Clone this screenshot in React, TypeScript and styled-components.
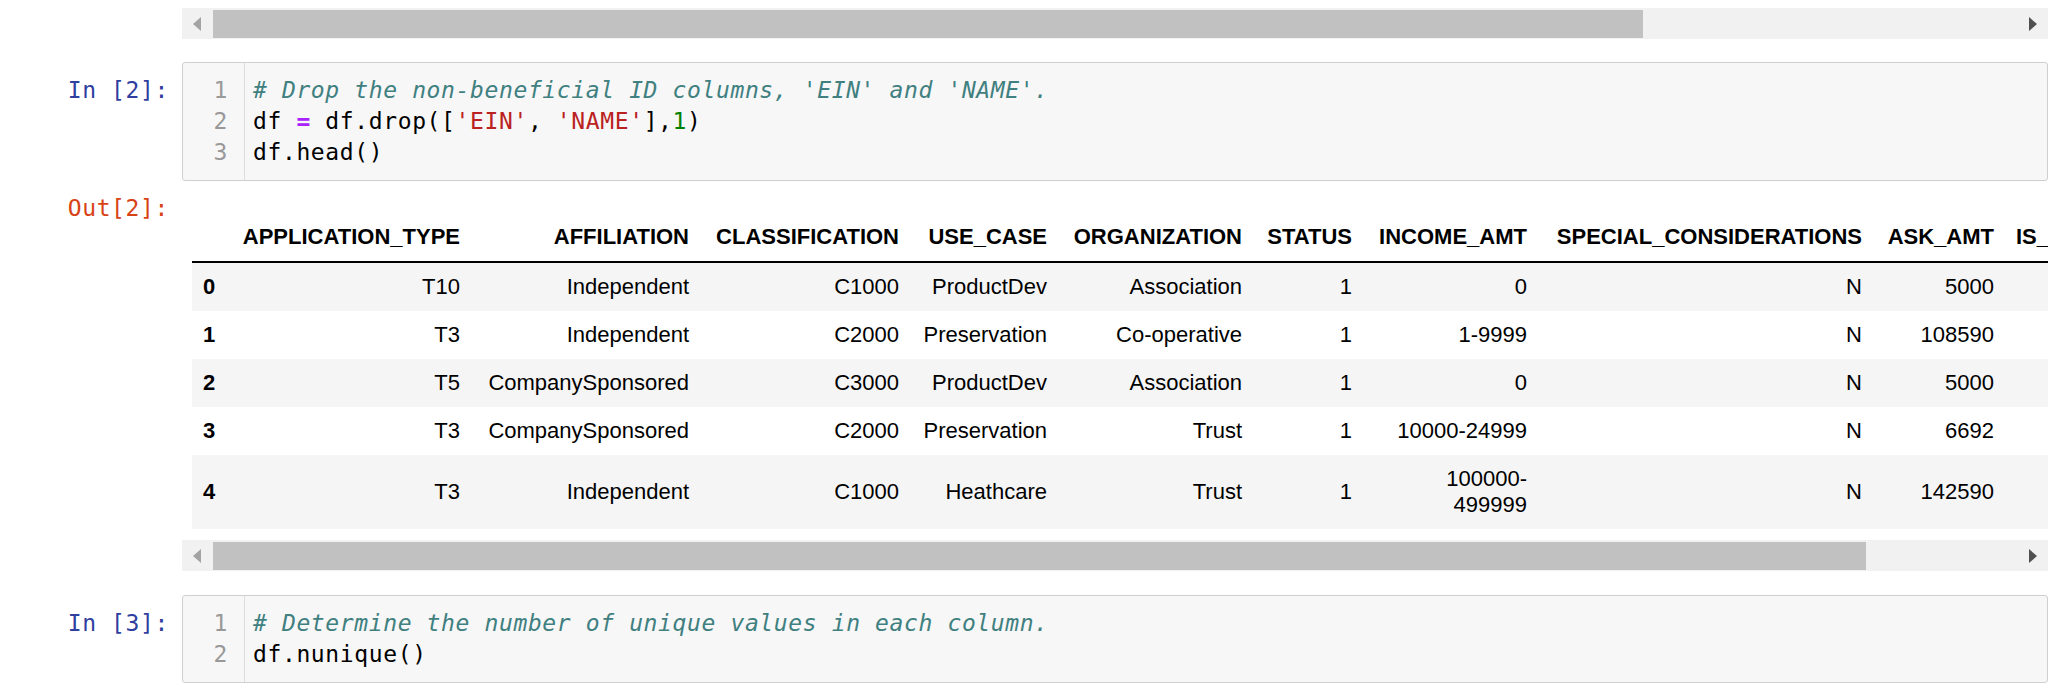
import React from 'react'
import styled, { createGlobalStyle } from 'styled-components'

const MONO = `'DejaVu Sans Mono', 'Liberation Mono', monospace`
const SANS = `'Liberation Sans', Arial, sans-serif`

const GlobalStyle = createGlobalStyle`
  html, body {
    margin: 0;
    padding: 0;
    background: #fff;
  }
`

type Tok = { t: string; k?: 'comment' | 'op' | 'str' | 'num' }

const cell1: Tok[][] = [
  [{ t: "# Drop the non-beneficial ID columns, 'EIN' and 'NAME'.", k: 'comment' }],
  [
    { t: 'df ' },
    { t: '=', k: 'op' },
    { t: ' df.drop([' },
    { t: "'EIN'", k: 'str' },
    { t: ', ' },
    { t: "'NAME'", k: 'str' },
    { t: '],' },
    { t: '1', k: 'num' },
    { t: ')' },
  ],
  [{ t: 'df.head()' }],
]

const cell2: Tok[][] = [
  [{ t: '# Determine the number of unique values in each column.', k: 'comment' }],
  [{ t: 'df.nunique()' }],
]

const columns = [
  { name: '', w: 37 },
  { name: 'APPLICATION_TYPE', w: 242 },
  { name: 'AFFILIATION', w: 229 },
  { name: 'CLASSIFICATION', w: 210 },
  { name: 'USE_CASE', w: 148 },
  { name: 'ORGANIZATION', w: 195 },
  { name: 'STATUS', w: 110 },
  { name: 'INCOME_AMT', w: 175 },
  { name: 'SPECIAL_CONSIDERATIONS', w: 335 },
  { name: 'ASK_AMT', w: 132 },
  { name: 'IS_SUCCESSFUL', w: 200 },
]

const rows = [
  ['0', 'T10', 'Independent', 'C1000', 'ProductDev', 'Association', '1', '0', 'N', '5000', '1'],
  ['1', 'T3', 'Independent', 'C2000', 'Preservation', 'Co-operative', '1', '1-9999', 'N', '108590', '1'],
  ['2', 'T5', 'CompanySponsored', 'C3000', 'ProductDev', 'Association', '1', '0', 'N', '5000', '1'],
  ['3', 'T3', 'CompanySponsored', 'C2000', 'Preservation', 'Trust', '1', '10000-24999', 'N', '6692', '1'],
  ['4', 'T3', 'Independent', 'C1000', 'Heathcare', 'Trust', '1', '100000-\n499999', 'N', '142590', '1'],
]

const tableWidth = columns.reduce((s, c) => s + c.w, 0)

function CodeCell({ n, lines }: { n: number; lines: Tok[][] }) {
  return (
    <Row $top={n === 2 ? 23 : 24}>
      <Prompt $kind="in">In [{n}]:</Prompt>
      <Editor>
        <Gutter>
          {lines.map((_, i) => (
            <LineNo key={i}>{i + 1}</LineNo>
          ))}
        </Gutter>
        <Lines>
          {lines.map((line, i) => (
            <CodeLine key={i}>
              {line.map((tok, j) => (
                <Token key={j} $k={tok.k}>
                  {tok.t}
                </Token>
              ))}
            </CodeLine>
          ))}
        </Lines>
      </Editor>
    </Row>
  )
}

function ScrollBar({ thumb }: { thumb: number }) {
  return (
    <Track>
      <ScrollButton>
        <Arrow $dir="left" />
      </ScrollButton>
      <Thumb $w={thumb} />
      <Spacer />
      <ScrollButton>
        <Arrow $dir="right" />
      </ScrollButton>
    </Track>
  )
}

const App: React.FC = () => {
  return (
    <Notebook>
      <GlobalStyle />
      <Row $top={0}>
        <Prompt $kind="in" />
        <ScrollBar thumb={1430} />
      </Row>

      <CodeCell n={2} lines={cell1} />

      <Row $top={12}>
        <Prompt $kind="out">Out[2]:</Prompt>
        <OutputArea>
          <TableScroll>
            <Frame>
              <colgroup>
                {columns.map((c, i) => (
                  <Col key={i} $w={c.w} />
                ))}
              </colgroup>
              <thead>
                <tr>
                  {columns.map((c, i) => (
                    <HeadCell key={i}>{c.name}</HeadCell>
                  ))}
                </tr>
              </thead>
              <tbody>
                {rows.map((r, i) => (
                  <BodyRow key={i} $odd={i % 2 === 0}>
                    <IndexCell>{r[0]}</IndexCell>
                    {r.slice(1).map((v, j) => (
                      <DataCell key={j}>
                        {v.split('\n').map((part, k) => (
                          <React.Fragment key={k}>
                            {k > 0 && <br />}
                            {part}
                          </React.Fragment>
                        ))}
                      </DataCell>
                    ))}
                  </BodyRow>
                ))}
              </tbody>
            </Frame>
          </TableScroll>
          <ScrollBar thumb={1653} />
        </OutputArea>
      </Row>

      <CodeCell n={3} lines={cell2} />
    </Notebook>
  )
}

const Notebook = styled.div`
  padding: 8px 18px 0 0;
  background: #fff;
`

const Row = styled.div<{ $top: number }>`
  display: grid;
  grid-template-columns: 182px 1fr;
  margin-top: ${p => p.$top}px;
`

const Prompt = styled.div<{ $kind: 'in' | 'out' }>`
  font-family: ${MONO};
  font-size: 23px;
  letter-spacing: 0.62px;
  line-height: 31px;
  text-align: right;
  padding: ${p => (p.$kind === 'in' ? '13px' : '0')} 13px 0 0;
  color: ${p => (p.$kind === 'in' ? '#303F9F' : '#D84315')};
  white-space: pre;
`

const Editor = styled.div`
  display: flex;
  background: #f7f7f7;
  border: 1px solid #cfcfcf;
  border-radius: 3px;
  font-family: ${MONO};
  font-size: 23px;
  letter-spacing: 0.62px;
  line-height: 31px;
`

const Gutter = styled.div`
  width: 62px;
  flex: none;
  box-sizing: border-box;
  border-right: 1px solid #dddddd;
  padding: 12px 16px 12px 0;
  text-align: right;
  color: #999999;
`

const LineNo = styled.div``

const Lines = styled.div`
  padding: 12px 8px 12px;
  color: #000;
`

const CodeLine = styled.div`
  white-space: pre;
`

const Token = styled.span<{ $k?: string }>`
  color: ${p =>
    p.$k === 'comment'
      ? '#408080'
      : p.$k === 'op'
      ? '#AA22FF'
      : p.$k === 'str'
      ? '#BA2121'
      : p.$k === 'num'
      ? '#008000'
      : '#000'};
  font-style: ${p => (p.$k === 'comment' ? 'italic' : 'normal')};
  font-weight: ${p => (p.$k === 'op' ? 'bold' : 'normal')};
`

const Track = styled.div`
  display: flex;
  align-items: center;
  height: 31px;
  background: #f1f1f1;
`

const ScrollButton = styled.div`
  width: 31px;
  height: 31px;
  flex: none;
  display: flex;
  align-items: center;
  justify-content: center;
`

const Arrow = styled.div<{ $dir: 'left' | 'right' }>`
  width: 0;
  height: 0;
  border-top: 7.5px solid transparent;
  border-bottom: 7.5px solid transparent;
  ${p =>
    p.$dir === 'left'
      ? 'border-right: 8px solid #a3a3a3; margin-right: 2px;'
      : 'border-left: 8px solid #505050; margin-left: 1px;'}
`

const Thumb = styled.div<{ $w: number }>`
  width: ${p => p.$w}px;
  height: 28px;
  margin-top: 1px;
  flex: none;
  background: #c1c1c1;
`

const Spacer = styled.div`
  flex: 1;
`

const OutputArea = styled.div`
  padding-top: 20px;
  min-width: 0;
`

const TableScroll = styled.div`
  overflow: hidden;
  padding-left: 10px;
  margin-bottom: 11px;
`

const Frame = styled.table`
  border-collapse: collapse;
  table-layout: fixed;
  width: ${tableWidth}px;
  font-family: ${SANS};
  font-size: 22px;
  line-height: 26px;
  color: #000;
`

const Col = styled.col<{ $w: number }>`
  width: ${p => p.$w}px;
`

const HeadCell = styled.th`
  font-weight: bold;
  text-align: right;
  vertical-align: bottom;
  padding: 11px;
  border-bottom: 2px solid #000;
  white-space: nowrap;
  overflow: visible;
`

const BodyRow = styled.tr<{ $odd: boolean }>`
  background: ${p => (p.$odd ? '#f5f5f5' : '#ffffff')};
`

const IndexCell = styled.th`
  font-weight: bold;
  text-align: left;
  vertical-align: middle;
  padding: 11px;
`

const DataCell = styled.td`
  text-align: right;
  vertical-align: middle;
  padding: 11px;
  white-space: nowrap;
`

export default App
